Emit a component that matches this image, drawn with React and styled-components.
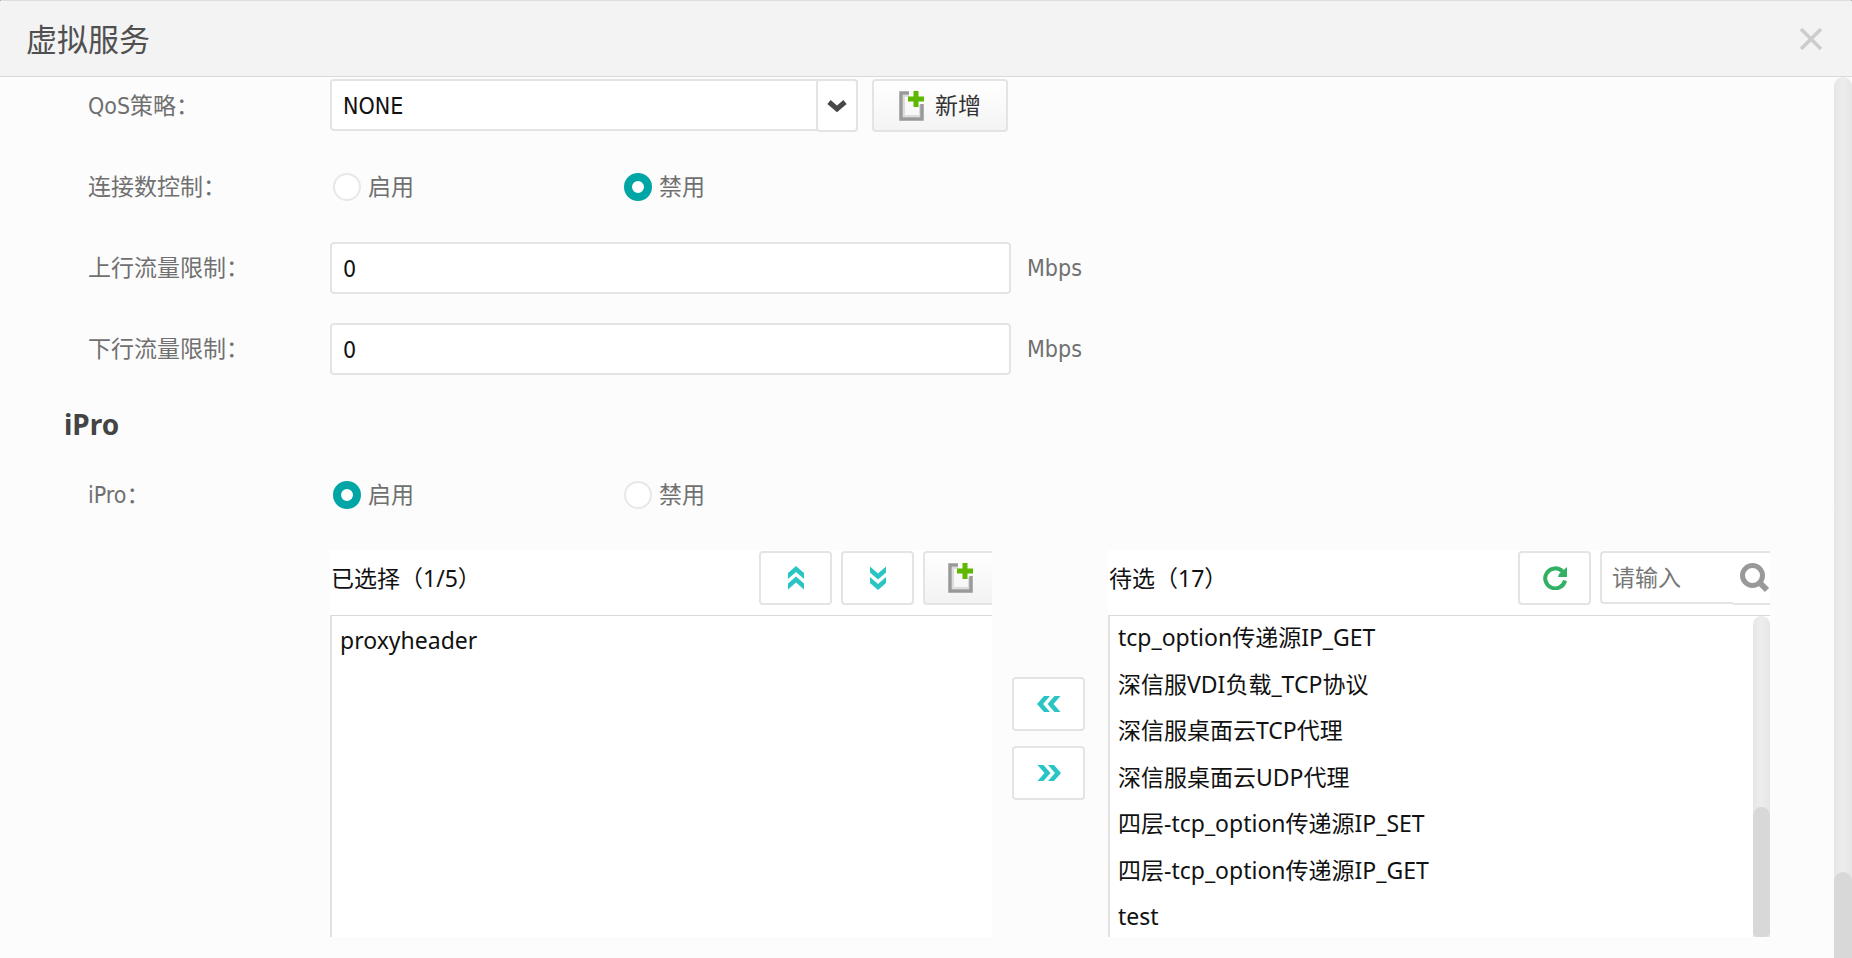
import React, { useState } from 'react'
import styled, { createGlobalStyle, css } from 'styled-components'

const candidates = [
    'tcp_option传递源IP_GET',
    '深信服VDI负载_TCP协议',
    '深信服桌面云TCP代理',
    '深信服桌面云UDP代理',
    '四层-tcp_option传递源IP_SET',
    '四层-tcp_option传递源IP_GET',
    'test',
]

const AddIcon = () => (
    <svg width='26' height='30' viewBox='0 0 26 30' aria-hidden='true'>
        <path d='M10 5H5v20h16V14' fill='none' stroke='#dcdcdc' strokeWidth='2' />
        <path d='M10 2H2v26h21V13' fill='none' stroke='#999' strokeWidth='3.5' />
        <path d='M17 0v16M9 8h16' fill='none' stroke='#5fb800' strokeWidth='5' />
    </svg>
)

const angles = { up: 0, right: 90, down: 180, left: 270 }

const DoubleArrow = ({ to }) => (
    <svg width='24' height='24' viewBox='0 0 24 24' aria-hidden='true'>
        <g
            transform={`rotate(${angles[to]} 12 12)`}
            fill='#29c5c5'
        >
            <path d='M12 0l8 7v6l-8-7-8 7V7z' />
            <path d='M12 10.5l8 7v6l-8-7-8 7v-6z' />
        </g>
    </svg>
)

const RefreshIcon = () => (
    <svg width='24' height='24' viewBox='0 0 24 24' aria-hidden='true'>
        <path
            d='M19.5 5.5A10 10 0 1 0 22 14.5'
            fill='none'
            stroke='#32b064'
            strokeWidth='4'
        />
        <path d='M24 1v10H15l1-3z' fill='#32b064' />
    </svg>
)

const SearchIcon = () => (
    <svg width='30' height='30' viewBox='0 0 30 30' aria-hidden='true'>
        <circle cx='12.5' cy='12.5' r='10' fill='none' stroke='#999' strokeWidth='5' />
        <path d='M19 19l8 8' stroke='#999' strokeWidth='6' />
    </svg>
)

const CloseIcon = () => (
    <svg width='22' height='22' viewBox='0 0 22 22' aria-hidden='true'>
        <path d='M1 1l20 20M21 1L1 21' stroke='#ccc' strokeWidth='3.5' />
    </svg>
)

const RadioPair = ({ name, label, value, onChange }) => (
    <Row role='radiogroup' aria-label={label}>
        <Label as='span'>{label}：</Label>
        {[
            ['on', '启用'],
            ['off', '禁用'],
        ].map(([key, text]) => (
            <RadioLabel key={key}>
                <Radio
                    type='radio'
                    name={name}
                    checked={value === key}
                    onChange={() => onChange(key)}
                />
                {text}
            </RadioLabel>
        ))}
    </Row>
)

const App = () => {
    const [connLimit, setConnLimit] = useState('off')
    const [ipro, setIpro] = useState('on')

    return (
        <Dialog>
            <GlobalStyle />
            <Header>
                <Title>虚拟服务</Title>
                <CloseButton aria-label='关闭'>
                    <CloseIcon />
                </CloseButton>
            </Header>
            <Body>
                <Content>
                    <Row>
                        <Label htmlFor='qos'>QoS策略：</Label>
                        <SelectBox>
                            <Select id='qos' defaultValue='NONE'>
                                <option>NONE</option>
                            </Select>
                            <SelectArrow>
                                <svg width='20' height='14' viewBox='0 0 20 14' aria-hidden='true'>
                                    <path
                                        d='M2 3l8 7 8-7'
                                        fill='none'
                                        stroke='#484848'
                                        strokeWidth='5'
                                    />
                                </svg>
                            </SelectArrow>
                        </SelectBox>
                        <AddButton>
                            <AddIcon />
                            新增
                        </AddButton>
                    </Row>
                    <RadioPair
                        name='conn'
                        label='连接数控制'
                        value={connLimit}
                        onChange={setConnLimit}
                    />
                    <Row>
                        <Label htmlFor='up'>上行流量限制：</Label>
                        <TextInput id='up' defaultValue='0' />
                        <Unit>Mbps</Unit>
                    </Row>
                    <Row>
                        <Label htmlFor='down'>下行流量限制：</Label>
                        <TextInput id='down' defaultValue='0' />
                        <Unit>Mbps</Unit>
                    </Row>
                    <SectionTitle>iPro</SectionTitle>
                    <RadioPair name='ipro' label='iPro' value={ipro} onChange={setIpro} />
                    <Transfer>
                        <Panel>
                            <PanelHeader>
                                <PanelTitle>已选择（1/5）</PanelTitle>
                                <Tools>
                                    <IconButton aria-label='上移'>
                                        <DoubleArrow to='up' />
                                    </IconButton>
                                    <IconButton aria-label='下移'>
                                        <DoubleArrow to='down' />
                                    </IconButton>
                                    <IconButton $raised aria-label='新增'>
                                        <AddIcon />
                                    </IconButton>
                                </Tools>
                            </PanelHeader>
                            <ListFrame>
                                <List>
                                    <Item>proxyheader</Item>
                                </List>
                            </ListFrame>
                        </Panel>
                        <MoveButtons>
                            <IconButton aria-label='添加'>
                                <DoubleArrow to='left' />
                            </IconButton>
                            <IconButton aria-label='移除'>
                                <DoubleArrow to='right' />
                            </IconButton>
                        </MoveButtons>
                        <Panel>
                            <PanelHeader>
                                <PanelTitle>待选（17）</PanelTitle>
                                <Tools>
                                    <IconButton aria-label='刷新'>
                                        <RefreshIcon />
                                    </IconButton>
                                    <Search>
                                        <SearchInput placeholder='请输入' aria-label='搜索' />
                                        <SearchButton aria-label='搜索'>
                                            <SearchIcon />
                                        </SearchButton>
                                    </Search>
                                </Tools>
                            </PanelHeader>
                            <ListFrame>
                                <List $full>
                                    {candidates.map((name) => (
                                        <Item key={name}>{name}</Item>
                                    ))}
                                </List>
                                <Track>
                                    <Thumb $size='130px' $rounded />
                                </Track>
                            </ListFrame>
                        </Panel>
                    </Transfer>
                </Content>
                <Track $wide>
                    <Thumb $size='86px' />
                </Track>
            </Body>
        </Dialog>
    )
}

const formFont = `'DejaVu Sans Condensed', 'Noto Sans CJK SC', sans-serif`
const listFont = `'Noto Sans', 'Noto Sans CJK SC', sans-serif`

const GlobalStyle = createGlobalStyle`
    * {
        box-sizing: border-box;
    }

    html {
        background: #222;
    }

    body {
        margin: 0;
        font: 23px/28px ${formFont};
        color: #707070;
    }

    button,
    input,
    select {
        margin: 0;
        font: inherit;
    }

    button {
        padding: 0;
        cursor: pointer;
    }

    svg {
        display: block;
        flex: none;
    }
`

const frame = css`
    border: 2px solid #e4e4e4;
    border-radius: 4px;
    background: #fff;
`

const Dialog = styled.div`
    display: flex;
    flex-direction: column;
    height: 100vh;
    overflow: hidden;
    border-radius: 2px 2px 0 0;
    background: #fcfcfc;
`

const Header = styled.header`
    display: flex;
    flex: none;
    align-items: center;
    justify-content: space-between;
    height: 77px;
    padding: 0 30px 0 26px;
    border-top: 1px solid #ddd;
    border-bottom: 1px solid #d8d8d8;
    background: #f3f3f3;
`

const Title = styled.h1`
    margin: 0;
    padding-top: 2px;
    font-size: 31px;
    line-height: 40px;
    font-weight: 400;
    color: #505050;
`

const CloseButton = styled.button`
    border: 0;
    background: none;
`

const Body = styled.div`
    display: flex;
    flex: 1;
    min-height: 0;
`

const Content = styled.main`
    display: flex;
    flex: 1;
    flex-direction: column;
    gap: 29px;
    min-width: 0;
    padding: 2px 64px 0 88px;
    overflow: hidden;
`

const Row = styled.div`
    display: flex;
    flex: none;
    align-items: center;
    min-height: 52px;
`

const Label = styled.label`
    flex: none;
    width: 242px;
`

const Unit = styled.span`
    margin-left: 16px;
`

const TextInput = styled.input`
    ${frame}
    flex: 0 1 681px;
    min-width: 0;
    height: 52px;
    padding: 2px 11px 0;
    color: #111;
`

const SelectBox = styled.div`
    display: flex;
    position: relative;
    flex: 0 1 528px;
    height: 53px;
`

const Select = styled.select`
    ${frame}
    flex: 1;
    height: 52px;
    padding: 2px 11px 0;
    appearance: none;
    color: #111;
`

const SelectArrow = styled.span`
    ${frame}
    position: absolute;
    top: 0;
    right: 0;
    display: flex;
    align-items: center;
    justify-content: center;
    width: 42px;
    height: 53px;
    pointer-events: none;
`

const AddButton = styled.button`
    ${frame}
    display: flex;
    align-items: center;
    justify-content: center;
    gap: 10px;
    width: 136px;
    height: 53px;
    margin-left: 14px;
    background: linear-gradient(#fff, #f4f4f4);
    color: #333;
`

const RadioLabel = styled.label`
    display: flex;
    align-items: center;
    gap: 7px;
    width: 291px;
    padding-left: 3px;
`

const Radio = styled.input`
    width: 28px;
    height: 28px;
    appearance: none;
    border: 2px solid #e8e8e8;
    border-radius: 50%;
    background: #fff;

    &:checked {
        border: 8px solid #00a6a5;
    }
`

const SectionTitle = styled.h2`
    margin: 0 0 -4px -24px;
    font: 700 28px/40px ${listFont};
    color: #444;
`

const Transfer = styled.section`
    display: flex;
    margin-left: 242px;
    font-family: ${listFont};
    color: #111;
`

const Panel = styled.div`
    flex: 1;
    min-width: 0;
    overflow: hidden;
    background: #fff;
`

const PanelHeader = styled.div`
    display: flex;
    justify-content: space-between;
    height: 65px;
    padding-top: 1px;
`

const PanelTitle = styled.h3`
    margin: 0;
    padding-left: 1px;
    font-size: 23px;
    font-weight: 400;
    line-height: 54px;
    white-space: nowrap;
`

/* the last tool runs past the panel edge and is cut there */
const Tools = styled.div`
    display: flex;
    gap: 9px;
    margin-right: -6px;
`

const IconButton = styled.button`
    ${frame}
    display: flex;
    align-items: center;
    justify-content: center;
    width: ${({ $raised }) => ($raised ? 75 : 73)}px;
    height: 54px;
    ${({ $raised }) => $raised && 'background: linear-gradient(#fff, #f2f2f2);'}
`

const MoveButtons = styled.div`
    display: flex;
    flex: none;
    flex-direction: column;
    gap: 15px;
    width: 116px;
    padding: 127px 0 0 20px;
`

const Search = styled.div`
    display: flex;
`

const SearchInput = styled.input`
    ${frame}
    width: 133px;
    height: 53px;
    padding: 0 10px;
    border-right: 0;
    border-radius: 4px 0 0 4px;
    font-family: ${formFont};

    &::placeholder {
        color: #777;
    }
`

const SearchButton = styled.button`
    ${frame}
    display: flex;
    align-items: center;
    padding-left: 7px;
    width: 43px;
    height: 54px;
    border-left: 0;
    border-radius: 0;
`

const ListFrame = styled.div`
    display: flex;
    height: 322px;
    border-top: 1px solid #d9d9d9;
    border-left: 2px solid #e2e2e2;
`

const List = styled.ul`
    display: flex;
    flex: 1;
    flex-direction: column;
    justify-content: ${({ $full }) => ($full ? 'space-between' : 'flex-start')};
    margin: 0;
    padding: ${({ $full }) => ($full ? '7px 8px' : '10px 8px')};
    list-style: none;
`

const Item = styled.li`
    white-space: nowrap;
`

const Track = styled.div`
    display: flex;
    flex: none;
    flex-direction: column;
    justify-content: flex-end;
    width: ${({ $wide }) => ($wide ? 18 : 17)}px;
    border-radius: 9px 9px 0 0;
    background: linear-gradient(90deg, #e6e6e6, #ededed 50%, #e6e6e6);
`

const Thumb = styled.div`
    height: ${({ $size }) => $size};
    border-radius: ${({ $rounded }) => ($rounded ? '9px 9px 5px 5px' : '9px 9px 0 0')};
    background: #d8d8d8;
`

export default App
